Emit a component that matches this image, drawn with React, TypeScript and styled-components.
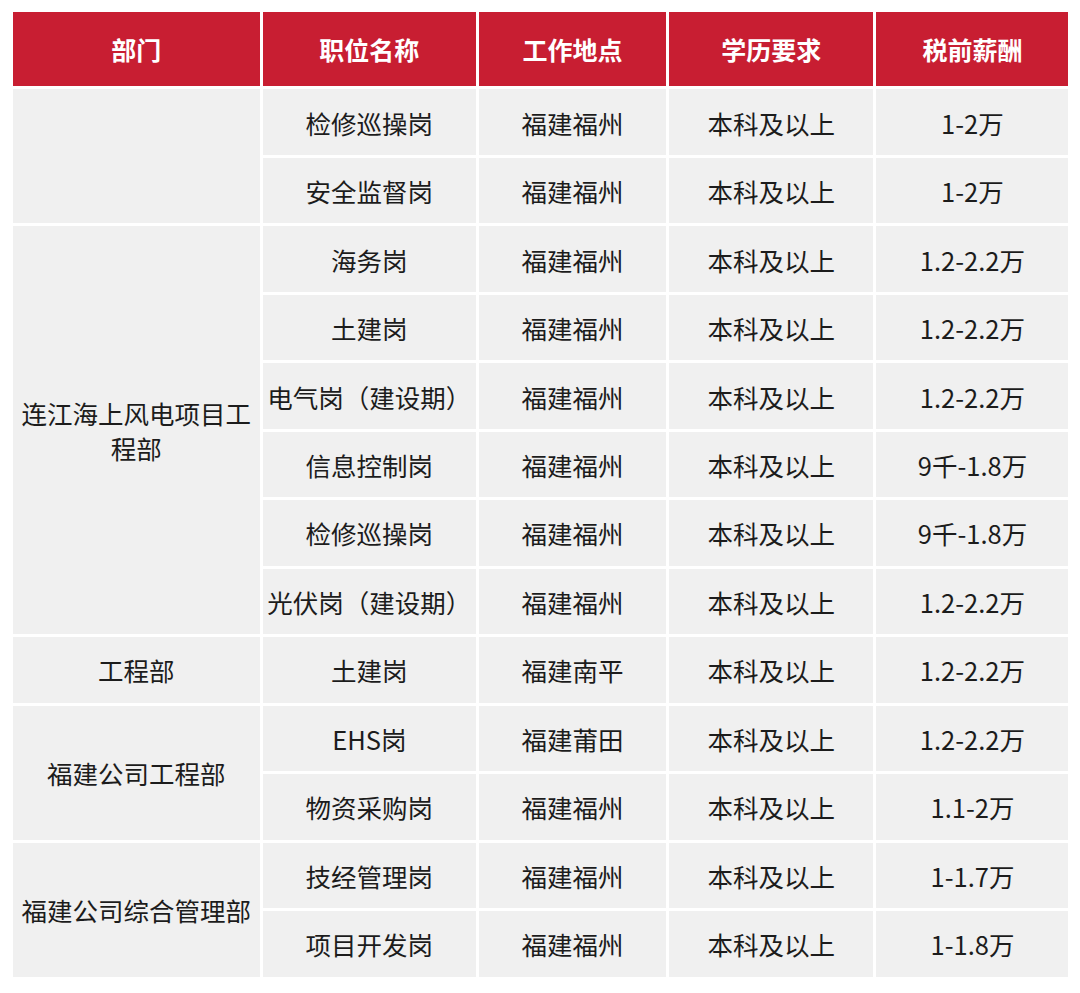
import React from "react";
import styled, { createGlobalStyle } from "styled-components";

const Global = createGlobalStyle`
  html, body { margin: 0; padding: 0; background: #ffffff; }
  body { font-family: "Noto Sans CJK SC", "Noto Sans", sans-serif; }
`;

const Table = styled.div`
  display: grid;
  grid-template-columns: 247px 213px 187px 204px 192px;
  grid-template-rows: 74px repeat(13, 65.4px);
  column-gap: 3.2px;
  row-gap: 3.1px;
  margin: 12.3px 0 0 12.7px;
  width: max-content;
`;

const HeadCell = styled.div`
  background: #c81e32;
  color: #ffffff;
  font-weight: 700;
  font-size: 25px;
  display: flex;
  align-items: center;
  justify-content: center;
  letter-spacing: 0;
`;

const Cell = styled.div<{ $span?: number }>`
  background: #f0f0f0;
  color: #1c1c1c;
  font-size: 25.5px;
  line-height: 35px;
  display: flex;
  align-items: center;
  justify-content: center;
  text-align: center;
  padding: 0 2px;
  grid-row: ${(p) => (p.$span ? `span ${p.$span}` : "auto")};
`;

type Row = { dept?: { name: string; span: number }; job: string; place: string; pay: string };

const rows: Row[] = [
  { dept: { name: "", span: 2 }, job: "检修巡操岗", place: "福建福州", pay: "1-2万" },
  { job: "安全监督岗", place: "福建福州", pay: "1-2万" },
  { dept: { name: "连江海上风电项目工程部", span: 6 }, job: "海务岗", place: "福建福州", pay: "1.2-2.2万" },
  { job: "土建岗", place: "福建福州", pay: "1.2-2.2万" },
  { job: "电气岗（建设期）", place: "福建福州", pay: "1.2-2.2万" },
  { job: "信息控制岗", place: "福建福州", pay: "9千-1.8万" },
  { job: "检修巡操岗", place: "福建福州", pay: "9千-1.8万" },
  { job: "光伏岗（建设期）", place: "福建福州", pay: "1.2-2.2万" },
  { dept: { name: "工程部", span: 1 }, job: "土建岗", place: "福建南平", pay: "1.2-2.2万" },
  { dept: { name: "福建公司工程部", span: 2 }, job: "EHS岗", place: "福建莆田", pay: "1.2-2.2万" },
  { job: "物资采购岗", place: "福建福州", pay: "1.1-2万" },
  { dept: { name: "福建公司综合管理部", span: 2 }, job: "技经管理岗", place: "福建福州", pay: "1-1.7万" },
  { job: "项目开发岗", place: "福建福州", pay: "1-1.8万" },
];

const headers = ["部门", "职位名称", "工作地点", "学历要求", "税前薪酬"];

export default function App() {
  return (
    <>
      <Global />
      <Table>
        {headers.map((h) => (
          <HeadCell key={h}>{h}</HeadCell>
        ))}
        {rows.map((r, i) => (
          <React.Fragment key={i}>
            {r.dept && <Cell $span={r.dept.span}>{r.dept.name}</Cell>}
            <Cell>{r.job}</Cell>
            <Cell>{r.place}</Cell>
            <Cell>本科及以上</Cell>
            <Cell>{r.pay}</Cell>
          </React.Fragment>
        ))}
      </Table>
    </>
  );
}
